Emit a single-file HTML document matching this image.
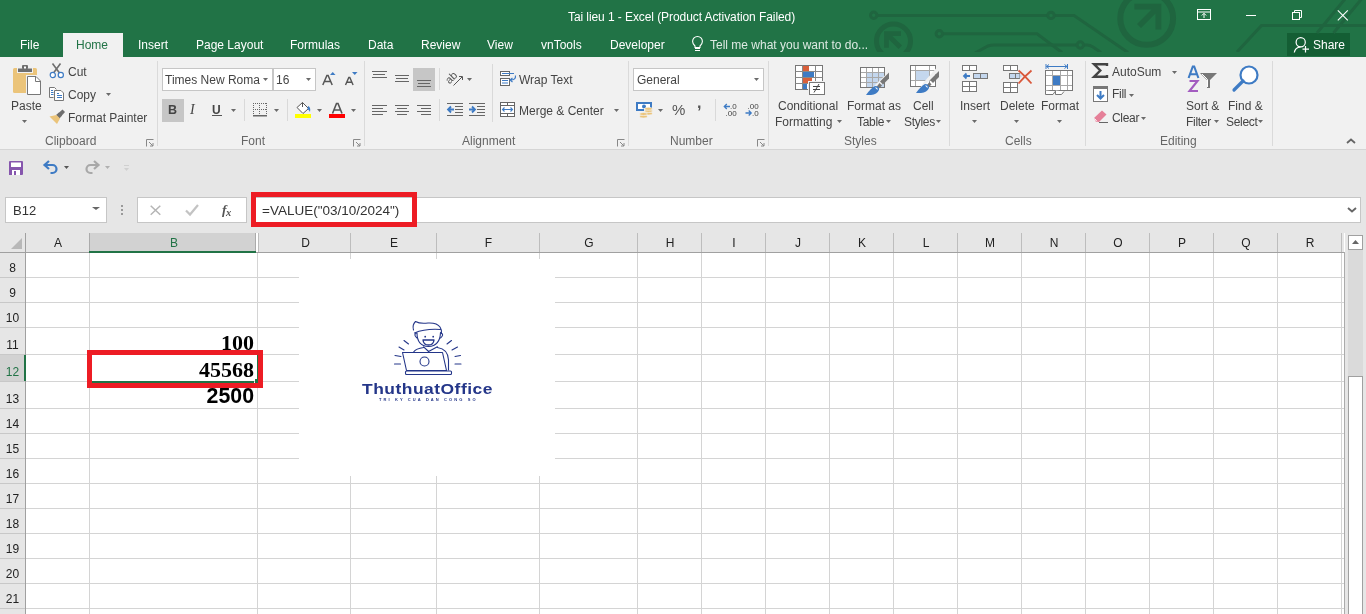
<!DOCTYPE html><html><head><meta charset="utf-8"><style>
*{margin:0;padding:0;box-sizing:border-box}
html,body{width:1366px;height:614px;overflow:hidden;background:#fff;font-family:"Liberation Sans",sans-serif}
.t{position:absolute;white-space:nowrap;line-height:1;-webkit-font-smoothing:antialiased;will-change:transform}
.r{position:absolute}
svg{position:absolute;overflow:visible}
</style></head><body>
<div class="r" style="left:0px;top:0px;width:1366px;height:57px;background:#217346;"></div>
<div class="r" style="left:0px;top:57px;width:1366px;height:92px;background:#F1F1F1;"></div>
<div class="r" style="left:0px;top:149px;width:1366px;height:1px;background:#D5D5D5;"></div>
<div class="r" style="left:0px;top:150px;width:1366px;height:83px;background:#E6E6E6;"></div>
<div class="r" style="left:63px;top:33px;width:60px;height:24px;background:#F1F1F1;"></div>
<div class="t" style="left:568px;top:11px;font-size:12px;color:#fff;letter-spacing:-0.08px">Tai lieu 1 - Excel (Product Activation Failed)</div>
<div class="t" style="left:20px;top:39px;font-size:12px;color:#fff;">File</div>
<div class="t" style="left:76px;top:39px;font-size:12px;color:#217346;">Home</div>
<div class="t" style="left:138px;top:39px;font-size:12px;color:#fff;">Insert</div>
<div class="t" style="left:196px;top:39px;font-size:12px;color:#fff;">Page Layout</div>
<div class="t" style="left:290px;top:39px;font-size:12px;color:#fff;">Formulas</div>
<div class="t" style="left:368px;top:39px;font-size:12px;color:#fff;">Data</div>
<div class="t" style="left:421px;top:39px;font-size:12px;color:#fff;">Review</div>
<div class="t" style="left:487px;top:39px;font-size:12px;color:#fff;">View</div>
<div class="t" style="left:541px;top:39px;font-size:12px;color:#fff;">vnTools</div>
<div class="t" style="left:610px;top:39px;font-size:12px;color:#fff;">Developer</div>
<div class="t" style="left:710px;top:39px;font-size:12px;color:#fff;opacity:.85">Tell me what you want to do...</div>
<div class="r" style="left:1287px;top:33px;width:63px;height:23px;background:#145E34;"></div>
<div class="t" style="left:1313px;top:39px;font-size:12px;color:#fff;">Share</div>
<div class="r" style="left:157px;top:61px;width:1px;height:85px;background:#DADADA;"></div>
<div class="r" style="left:364px;top:61px;width:1px;height:85px;background:#DADADA;"></div>
<div class="r" style="left:628px;top:61px;width:1px;height:85px;background:#DADADA;"></div>
<div class="r" style="left:768px;top:61px;width:1px;height:85px;background:#DADADA;"></div>
<div class="r" style="left:949px;top:61px;width:1px;height:85px;background:#DADADA;"></div>
<div class="r" style="left:1085px;top:61px;width:1px;height:85px;background:#DADADA;"></div>
<div class="r" style="left:1272px;top:61px;width:1px;height:85px;background:#DADADA;"></div>
<div class="t" style="left:45px;top:135px;font-size:12px;color:#666;">Clipboard</div>
<div class="t" style="left:241px;top:135px;font-size:12px;color:#666;">Font</div>
<div class="t" style="left:462px;top:135px;font-size:12px;color:#666;">Alignment</div>
<div class="t" style="left:670px;top:135px;font-size:12px;color:#666;">Number</div>
<div class="t" style="left:844px;top:135px;font-size:12px;color:#666;">Styles</div>
<div class="t" style="left:1005px;top:135px;font-size:12px;color:#666;">Cells</div>
<div class="t" style="left:1160px;top:135px;font-size:12px;color:#666;">Editing</div>
<div class="t" style="left:11px;top:100px;font-size:12px;color:#444;">Paste</div>
<div class="t" style="left:68px;top:66px;font-size:12px;color:#444;">Cut</div>
<div class="t" style="left:68px;top:89px;font-size:12px;color:#444;">Copy</div>
<div class="t" style="left:68px;top:112px;font-size:12px;color:#444;">Format Painter</div>
<div class="r" style="left:162px;top:68px;width:111px;height:23px;background:#fff;border:1px solid #C6C6C6"></div>
<div class="r" style="left:273px;top:68px;width:43px;height:23px;background:#fff;border:1px solid #C6C6C6"></div>
<div class="t" style="left:165px;top:74px;font-size:12px;color:#444;">Times New Roma</div>
<div class="t" style="left:276px;top:74px;font-size:12px;color:#444;">16</div>
<div class="r" style="left:162px;top:99px;width:22px;height:23px;background:#C6C6C6;"></div>
<div class="r" style="left:413px;top:68px;width:22px;height:23px;background:#C6C6C6;"></div>
<div class="t" style="left:519px;top:74px;font-size:12px;color:#444;">Wrap Text</div>
<div class="t" style="left:519px;top:105px;font-size:12px;color:#444;">Merge &amp; Center</div>
<div class="r" style="left:633px;top:68px;width:131px;height:23px;background:#fff;border:1px solid #C6C6C6"></div>
<div class="t" style="left:637px;top:74px;font-size:12px;color:#444;">General</div>
<div class="t" style="left:778px;top:100px;font-size:12px;color:#444;">Conditional</div>
<div class="t" style="left:775px;top:116px;font-size:12px;color:#444;">Formatting</div>
<div class="t" style="left:847px;top:100px;font-size:12px;color:#444;">Format as</div>
<div class="t" style="left:857px;top:116px;font-size:12px;color:#444;letter-spacing:-0.3px">Table</div>
<div class="t" style="left:913px;top:100px;font-size:12px;color:#444;">Cell</div>
<div class="t" style="left:904px;top:116px;font-size:12px;color:#444;letter-spacing:-0.3px">Styles</div>
<div class="t" style="left:960px;top:100px;font-size:12px;color:#444;">Insert</div>
<div class="t" style="left:1000px;top:100px;font-size:12px;color:#444;">Delete</div>
<div class="t" style="left:1041px;top:100px;font-size:12px;color:#444;">Format</div>
<div class="t" style="left:1112px;top:66px;font-size:12px;color:#444;">AutoSum</div>
<div class="t" style="left:1112px;top:88px;font-size:12px;color:#444;letter-spacing:-0.3px">Fill</div>
<div class="t" style="left:1112px;top:112px;font-size:12px;color:#444;letter-spacing:-0.3px">Clear</div>
<div class="t" style="left:1186px;top:100px;font-size:12px;color:#444;">Sort &amp;</div>
<div class="t" style="left:1186px;top:116px;font-size:12px;color:#444;letter-spacing:-0.3px">Filter</div>
<div class="t" style="left:1228px;top:100px;font-size:12px;color:#444;">Find &amp;</div>
<div class="t" style="left:1226px;top:116px;font-size:12px;color:#444;letter-spacing:-0.3px">Select</div>
<div class="r" style="left:5px;top:197px;width:102px;height:26px;background:#fff;border:1px solid #C6C6C6"></div>
<div class="t" style="left:13px;top:204px;font-size:13px;color:#333;">B12</div>
<div class="r" style="left:137px;top:197px;width:110px;height:26px;background:#fff;border:1px solid #C6C6C6"></div>
<div class="r" style="left:251px;top:197px;width:1110px;height:26px;background:#fff;border:1px solid #C6C6C6"></div>
<div class="t" style="left:262px;top:204px;font-size:13.5px;color:#333;">=VALUE("03/10/2024")</div>
<div class="r" style="left:251px;top:192px;width:166px;height:35px;background:transparent;border:5px solid #ED1C24"></div>
<div class="r" style="left:0px;top:233px;width:1344px;height:20px;background:#E6E6E6;"></div>
<div class="r" style="left:0px;top:252px;width:1344px;height:1px;background:#A0A0A0;"></div>
<div class="r" style="left:0px;top:253px;width:25px;height:361px;background:#E6E6E6;"></div>
<div class="r" style="left:25px;top:233px;width:1px;height:381px;background:#A0A0A0;"></div>
<div class="r" style="left:90px;top:233px;width:165px;height:19px;background:#D2D2D2;"></div>
<div class="r" style="left:0px;top:355px;width:25px;height:26px;background:#D2D2D2;"></div>
<div class="r" style="left:24px;top:355px;width:2px;height:26px;background:#217346;"></div>
<div class="r" style="left:89px;top:253px;width:1px;height:361px;background:#D4D4D4;"></div>
<div class="r" style="left:257px;top:253px;width:1px;height:361px;background:#D4D4D4;"></div>
<div class="r" style="left:350px;top:253px;width:1px;height:361px;background:#D4D4D4;"></div>
<div class="r" style="left:436px;top:253px;width:1px;height:361px;background:#D4D4D4;"></div>
<div class="r" style="left:539px;top:253px;width:1px;height:361px;background:#D4D4D4;"></div>
<div class="r" style="left:637px;top:253px;width:1px;height:361px;background:#D4D4D4;"></div>
<div class="r" style="left:701px;top:253px;width:1px;height:361px;background:#D4D4D4;"></div>
<div class="r" style="left:765px;top:253px;width:1px;height:361px;background:#D4D4D4;"></div>
<div class="r" style="left:829px;top:253px;width:1px;height:361px;background:#D4D4D4;"></div>
<div class="r" style="left:893px;top:253px;width:1px;height:361px;background:#D4D4D4;"></div>
<div class="r" style="left:957px;top:253px;width:1px;height:361px;background:#D4D4D4;"></div>
<div class="r" style="left:1021px;top:253px;width:1px;height:361px;background:#D4D4D4;"></div>
<div class="r" style="left:1085px;top:253px;width:1px;height:361px;background:#D4D4D4;"></div>
<div class="r" style="left:1149px;top:253px;width:1px;height:361px;background:#D4D4D4;"></div>
<div class="r" style="left:1213px;top:253px;width:1px;height:361px;background:#D4D4D4;"></div>
<div class="r" style="left:1277px;top:253px;width:1px;height:361px;background:#D4D4D4;"></div>
<div class="r" style="left:1341px;top:253px;width:1px;height:361px;background:#D4D4D4;"></div>
<div class="r" style="left:26px;top:277px;width:1318px;height:1px;background:#D4D4D4;"></div>
<div class="r" style="left:26px;top:302px;width:1318px;height:1px;background:#D4D4D4;"></div>
<div class="r" style="left:26px;top:327px;width:1318px;height:1px;background:#D4D4D4;"></div>
<div class="r" style="left:26px;top:354px;width:1318px;height:1px;background:#D4D4D4;"></div>
<div class="r" style="left:26px;top:381px;width:1318px;height:1px;background:#D4D4D4;"></div>
<div class="r" style="left:26px;top:408px;width:1318px;height:1px;background:#D4D4D4;"></div>
<div class="r" style="left:26px;top:433px;width:1318px;height:1px;background:#D4D4D4;"></div>
<div class="r" style="left:26px;top:458px;width:1318px;height:1px;background:#D4D4D4;"></div>
<div class="r" style="left:26px;top:483px;width:1318px;height:1px;background:#D4D4D4;"></div>
<div class="r" style="left:26px;top:508px;width:1318px;height:1px;background:#D4D4D4;"></div>
<div class="r" style="left:26px;top:533px;width:1318px;height:1px;background:#D4D4D4;"></div>
<div class="r" style="left:26px;top:558px;width:1318px;height:1px;background:#D4D4D4;"></div>
<div class="r" style="left:26px;top:583px;width:1318px;height:1px;background:#D4D4D4;"></div>
<div class="r" style="left:26px;top:608px;width:1318px;height:1px;background:#D4D4D4;"></div>
<div class="r" style="left:89px;top:233px;width:1px;height:19px;background:#ABABAB;"></div>
<div class="r" style="left:350px;top:233px;width:1px;height:19px;background:#BDBDBD;"></div>
<div class="r" style="left:436px;top:233px;width:1px;height:19px;background:#BDBDBD;"></div>
<div class="r" style="left:539px;top:233px;width:1px;height:19px;background:#BDBDBD;"></div>
<div class="r" style="left:637px;top:233px;width:1px;height:19px;background:#BDBDBD;"></div>
<div class="r" style="left:701px;top:233px;width:1px;height:19px;background:#BDBDBD;"></div>
<div class="r" style="left:765px;top:233px;width:1px;height:19px;background:#BDBDBD;"></div>
<div class="r" style="left:829px;top:233px;width:1px;height:19px;background:#BDBDBD;"></div>
<div class="r" style="left:893px;top:233px;width:1px;height:19px;background:#BDBDBD;"></div>
<div class="r" style="left:957px;top:233px;width:1px;height:19px;background:#BDBDBD;"></div>
<div class="r" style="left:1021px;top:233px;width:1px;height:19px;background:#BDBDBD;"></div>
<div class="r" style="left:1085px;top:233px;width:1px;height:19px;background:#BDBDBD;"></div>
<div class="r" style="left:1149px;top:233px;width:1px;height:19px;background:#BDBDBD;"></div>
<div class="r" style="left:1213px;top:233px;width:1px;height:19px;background:#BDBDBD;"></div>
<div class="r" style="left:1277px;top:233px;width:1px;height:19px;background:#BDBDBD;"></div>
<div class="r" style="left:1341px;top:233px;width:1px;height:19px;background:#BDBDBD;"></div>
<div class="r" style="left:255px;top:233px;width:1px;height:19px;background:#ABABAB;"></div>
<div class="r" style="left:256px;top:233px;width:2px;height:19px;background:#FFFFFF;"></div>
<div class="r" style="left:258px;top:233px;width:1px;height:19px;background:#BDBDBD;"></div>
<div class="r" style="left:89px;top:251px;width:167px;height:2px;background:#217346;"></div>
<div class="r" style="left:0px;top:277px;width:25px;height:1px;background:#C8C8C8;"></div>
<div class="r" style="left:0px;top:302px;width:25px;height:1px;background:#C8C8C8;"></div>
<div class="r" style="left:0px;top:327px;width:25px;height:1px;background:#C8C8C8;"></div>
<div class="r" style="left:0px;top:354px;width:25px;height:1px;background:#C8C8C8;"></div>
<div class="r" style="left:0px;top:381px;width:25px;height:1px;background:#C8C8C8;"></div>
<div class="r" style="left:0px;top:408px;width:25px;height:1px;background:#C8C8C8;"></div>
<div class="r" style="left:0px;top:433px;width:25px;height:1px;background:#C8C8C8;"></div>
<div class="r" style="left:0px;top:458px;width:25px;height:1px;background:#C8C8C8;"></div>
<div class="r" style="left:0px;top:483px;width:25px;height:1px;background:#C8C8C8;"></div>
<div class="r" style="left:0px;top:508px;width:25px;height:1px;background:#C8C8C8;"></div>
<div class="r" style="left:0px;top:533px;width:25px;height:1px;background:#C8C8C8;"></div>
<div class="r" style="left:0px;top:558px;width:25px;height:1px;background:#C8C8C8;"></div>
<div class="r" style="left:0px;top:583px;width:25px;height:1px;background:#C8C8C8;"></div>
<div class="r" style="left:0px;top:608px;width:25px;height:1px;background:#C8C8C8;"></div>
<div class="t" style="left:26px;top:237px;width:64px;text-align:center;font-size:12px;color:#222">A</div>
<div class="t" style="left:90px;top:237px;width:168px;text-align:center;font-size:12px;color:#217346">B</div>
<div class="t" style="left:260px;top:237px;width:91px;text-align:center;font-size:12px;color:#222">D</div>
<div class="t" style="left:351px;top:237px;width:86px;text-align:center;font-size:12px;color:#222">E</div>
<div class="t" style="left:437px;top:237px;width:103px;text-align:center;font-size:12px;color:#222">F</div>
<div class="t" style="left:540px;top:237px;width:98px;text-align:center;font-size:12px;color:#222">G</div>
<div class="t" style="left:638px;top:237px;width:64px;text-align:center;font-size:12px;color:#222">H</div>
<div class="t" style="left:702px;top:237px;width:64px;text-align:center;font-size:12px;color:#222">I</div>
<div class="t" style="left:766px;top:237px;width:64px;text-align:center;font-size:12px;color:#222">J</div>
<div class="t" style="left:830px;top:237px;width:64px;text-align:center;font-size:12px;color:#222">K</div>
<div class="t" style="left:894px;top:237px;width:64px;text-align:center;font-size:12px;color:#222">L</div>
<div class="t" style="left:958px;top:237px;width:64px;text-align:center;font-size:12px;color:#222">M</div>
<div class="t" style="left:1022px;top:237px;width:64px;text-align:center;font-size:12px;color:#222">N</div>
<div class="t" style="left:1086px;top:237px;width:64px;text-align:center;font-size:12px;color:#222">O</div>
<div class="t" style="left:1150px;top:237px;width:64px;text-align:center;font-size:12px;color:#222">P</div>
<div class="t" style="left:1214px;top:237px;width:64px;text-align:center;font-size:12px;color:#222">Q</div>
<div class="t" style="left:1278px;top:237px;width:64px;text-align:center;font-size:12px;color:#222">R</div>
<div class="t" style="left:0px;top:262px;width:25px;text-align:center;font-size:12px;color:#222">8</div>
<div class="t" style="left:0px;top:287px;width:25px;text-align:center;font-size:12px;color:#222">9</div>
<div class="t" style="left:0px;top:312px;width:25px;text-align:center;font-size:12px;color:#222">10</div>
<div class="t" style="left:0px;top:339px;width:25px;text-align:center;font-size:12px;color:#222">11</div>
<div class="t" style="left:0px;top:366px;width:25px;text-align:center;font-size:12px;color:#217346">12</div>
<div class="t" style="left:0px;top:393px;width:25px;text-align:center;font-size:12px;color:#222">13</div>
<div class="t" style="left:0px;top:418px;width:25px;text-align:center;font-size:12px;color:#222">14</div>
<div class="t" style="left:0px;top:443px;width:25px;text-align:center;font-size:12px;color:#222">15</div>
<div class="t" style="left:0px;top:468px;width:25px;text-align:center;font-size:12px;color:#222">16</div>
<div class="t" style="left:0px;top:493px;width:25px;text-align:center;font-size:12px;color:#222">17</div>
<div class="t" style="left:0px;top:518px;width:25px;text-align:center;font-size:12px;color:#222">18</div>
<div class="t" style="left:0px;top:543px;width:25px;text-align:center;font-size:12px;color:#222">19</div>
<div class="t" style="left:0px;top:568px;width:25px;text-align:center;font-size:12px;color:#222">20</div>
<div class="t" style="left:0px;top:593px;width:25px;text-align:center;font-size:12px;color:#222">21</div>
<div class="r" style="left:1344px;top:252px;width:1px;height:362px;background:#ABABAB;"></div>
<div class="r" style="left:1345px;top:233px;width:21px;height:381px;background:#E6E6E6;"></div>
<div class="r" style="left:1348px;top:250px;width:15px;height:364px;background:#DADADA;"></div>
<div class="r" style="left:1348px;top:235px;width:15px;height:15px;background:#fff;border:1px solid #A0A0A0"></div>
<div class="r" style="left:1348px;top:376px;width:15px;height:250px;background:#fff;border:1px solid #A0A0A0"></div>
<div class="t" style="left:90px;top:332px;width:164px;text-align:right;font-family:'Liberation Serif';font-weight:bold;font-size:22px;color:#000">100</div>
<div class="t" style="left:90px;top:359px;width:164px;text-align:right;font-family:'Liberation Serif';font-weight:bold;font-size:22px;color:#000">45568</div>
<div class="t" style="left:90px;top:386px;width:164px;text-align:right;font-family:'Liberation Sans';font-weight:bold;font-size:21.33px;color:#000">2500</div>
<div class="r" style="left:88px;top:353px;width:2px;height:30px;background:#217346;"></div>
<div class="r" style="left:88px;top:353px;width:170px;height:2px;background:#217346;"></div>
<div class="r" style="left:257px;top:355px;width:1px;height:24px;background:#217346;"></div>
<div class="r" style="left:88px;top:381px;width:166px;height:2px;background:#217346;"></div>
<div class="r" style="left:255px;top:379px;width:3px;height:4px;background:#217346;"></div>
<div class="r" style="left:299px;top:259px;width:256px;height:217px;background:#fff;"></div>
<div class="r" style="left:87px;top:350px;width:176px;height:38px;background:transparent;border:5px solid #ED1C24"></div>
<svg style="left:13px;top:65px" width="29" height="30" viewBox="0 0 29 30"><rect x="0" y="3" width="24" height="25" rx="1.5" fill="#EBC47A"/><rect x="4" y="2" width="16" height="6" fill="#F1F1F1"/><path d="M5 3.5H19V7H5Z" fill="#6E6E6E"/><rect x="9" y="0" width="6" height="4" rx="1" fill="#6E6E6E"/><rect x="11" y="1.5" width="2" height="2" fill="#fff"/><rect x="13" y="10" width="16" height="21" fill="#F1F1F1"/><path d="M14.5 11.5H23L27.5 16V29.5H14.5Z" fill="#fff" stroke="#777" stroke-width="1"/><path d="M22.5 11.5V16.5H27.5" fill="none" stroke="#777"/></svg>
<svg style="left:22px;top:120px" width="5" height="3" viewBox="0 0 5 3"><path d="M0 0H5L2.5 3Z" fill="#6A6A6A"/></svg>
<svg style="left:49px;top:63px" width="16" height="16" viewBox="0 0 16 16"><path d="M3.5 0.5L10.5 10M11.5 0.5L4.5 10" stroke="#6E6E6E" stroke-width="1.6" fill="none"/><circle cx="3.8" cy="12" r="2.6" fill="#fff" stroke="#3E7BC4" stroke-width="1.2"/><circle cx="11.8" cy="12" r="2.6" fill="#fff" stroke="#3E7BC4" stroke-width="1.2"/></svg>
<svg style="left:49px;top:87px" width="16" height="15" viewBox="0 0 16 15"><path d="M0.5 0.5H5.5L7.5 2.5V10.5H0.5Z" fill="#fff" stroke="#777"/><path d="M2 3.5H4M2 5.5H5M2 7.5H5" stroke="#3E7BC4" stroke-width="1.2"/><path d="M4.5 2.5H12.5L15.5 5.5V14.5H4.5Z" fill="#F1F1F1"/><path d="M5.5 3.5H12L14.5 6V13.5H5.5Z" fill="#fff" stroke="#777"/><path d="M8 6.5H10M8 8.5H13M8 10.5H13" stroke="#3E7BC4" stroke-width="1.2"/></svg>
<svg style="left:106px;top:93px" width="5" height="3" viewBox="0 0 5 3"><path d="M0 0H5L2.5 3Z" fill="#6A6A6A"/></svg>
<svg style="left:49px;top:109px" width="17" height="16" viewBox="0 0 17 16"><path d="M9 4.5L13.5 0.5L16 3L12 7.5Z" fill="#6E6E6E"/><path d="M7 6L10 3.5L13 6.5L10.5 9.5Z" fill="#6E6E6E"/><path d="M0.5 7.5L7.5 6L11 9.5L8 15Z" fill="#EBC47A"/></svg>
<svg style="left:263px;top:78px" width="5" height="3" viewBox="0 0 5 3"><path d="M0 0H5L2.5 3Z" fill="#6A6A6A"/></svg>
<svg style="left:306px;top:78px" width="5" height="3" viewBox="0 0 5 3"><path d="M0 0H5L2.5 3Z" fill="#6A6A6A"/></svg>
<svg style="left:321px;top:71px" width="16" height="15" viewBox="0 0 16 15"><path d="M1.8 14L5.9 4.5H7.1L11.2 14M3.4 10.6H9.6" stroke="#555" stroke-width="1.5" fill="none"/><path d="M9 4H14.5L11.75 1Z" fill="#3E7BC4"/></svg>
<svg style="left:344px;top:71px" width="16" height="15" viewBox="0 0 16 15"><path d="M1.5 14L4.8 6.5H5.8L9.1 14M2.8 11.3H7.8" stroke="#555" stroke-width="1.4" fill="none"/><path d="M8 1H13.5L10.75 4Z" fill="#3E7BC4"/></svg>
<div class="t" style="left:168px;top:104px;font-size:12.5px;font-weight:bold;color:#444">B</div>
<div class="t" style="left:190px;top:103px;font-size:14px;font-style:italic;font-family:'Liberation Serif',serif;color:#444">I</div>
<div class="t" style="left:212px;top:104px;font-size:12px;font-weight:bold;color:#444">U</div>
<svg style="left:212px;top:115px" width="10" height="1" viewBox="0 0 10 1"><rect width="10" height="1" fill="#555"/></svg>
<svg style="left:231px;top:109px" width="5" height="3" viewBox="0 0 5 3"><path d="M0 0H5L2.5 3Z" fill="#6A6A6A"/></svg>
<div class="r" style="left:244px;top:99px;width:1px;height:22px;background:#D9D9D9"></div>
<svg style="left:253px;top:103px" width="14" height="14" viewBox="0 0 14 14"><rect x="0" y="0" width="1" height="1" fill="#666"/><rect x="0" y="6" width="1" height="1" fill="#666"/><rect x="0" y="12" width="1" height="1" fill="#666"/><rect x="0" y="0" width="1" height="1" fill="#666"/><rect x="6" y="0" width="1" height="1" fill="#666"/><rect x="13" y="0" width="1" height="1" fill="#666"/><rect x="2" y="0" width="1" height="1" fill="#666"/><rect x="2" y="6" width="1" height="1" fill="#666"/><rect x="2" y="12" width="1" height="1" fill="#666"/><rect x="0" y="2" width="1" height="1" fill="#666"/><rect x="6" y="2" width="1" height="1" fill="#666"/><rect x="13" y="2" width="1" height="1" fill="#666"/><rect x="4" y="0" width="1" height="1" fill="#666"/><rect x="4" y="6" width="1" height="1" fill="#666"/><rect x="4" y="12" width="1" height="1" fill="#666"/><rect x="0" y="4" width="1" height="1" fill="#666"/><rect x="6" y="4" width="1" height="1" fill="#666"/><rect x="13" y="4" width="1" height="1" fill="#666"/><rect x="6" y="0" width="1" height="1" fill="#666"/><rect x="6" y="6" width="1" height="1" fill="#666"/><rect x="6" y="12" width="1" height="1" fill="#666"/><rect x="0" y="6" width="1" height="1" fill="#666"/><rect x="6" y="6" width="1" height="1" fill="#666"/><rect x="13" y="6" width="1" height="1" fill="#666"/><rect x="8" y="0" width="1" height="1" fill="#666"/><rect x="8" y="6" width="1" height="1" fill="#666"/><rect x="8" y="12" width="1" height="1" fill="#666"/><rect x="0" y="8" width="1" height="1" fill="#666"/><rect x="6" y="8" width="1" height="1" fill="#666"/><rect x="13" y="8" width="1" height="1" fill="#666"/><rect x="10" y="0" width="1" height="1" fill="#666"/><rect x="10" y="6" width="1" height="1" fill="#666"/><rect x="10" y="12" width="1" height="1" fill="#666"/><rect x="0" y="10" width="1" height="1" fill="#666"/><rect x="6" y="10" width="1" height="1" fill="#666"/><rect x="13" y="10" width="1" height="1" fill="#666"/><rect x="12" y="0" width="1" height="1" fill="#666"/><rect x="12" y="6" width="1" height="1" fill="#666"/><rect x="12" y="12" width="1" height="1" fill="#666"/><rect x="0" y="12" width="1" height="1" fill="#666"/><rect x="6" y="12" width="1" height="1" fill="#666"/><rect x="13" y="12" width="1" height="1" fill="#666"/><rect x="0" y="12" width="14" height="1.5" fill="#666"/></svg>
<svg style="left:274px;top:109px" width="5" height="3" viewBox="0 0 5 3"><path d="M0 0H5L2.5 3Z" fill="#6A6A6A"/></svg>
<div class="r" style="left:287px;top:99px;width:1px;height:22px;background:#D9D9D9"></div>
<svg style="left:294px;top:101px" width="18" height="18" viewBox="0 0 18 18"><path d="M8.5 1.5L14.5 7.5L9 12.5L3 6.5Z" fill="#fff" stroke="#555" stroke-width="1"/><path d="M8.5 6V1.5" stroke="#555"/><path d="M14 5Q17 6 16 11Q15 9 13.5 8Z" fill="#3E7BC4"/><rect x="1" y="13" width="16" height="4" fill="#FFFF00"/></svg>
<svg style="left:317px;top:109px" width="5" height="3" viewBox="0 0 5 3"><path d="M0 0H5L2.5 3Z" fill="#6A6A6A"/></svg>
<svg style="left:328px;top:101px" width="18" height="18" viewBox="0 0 18 18"><path d="M4.5 12.5L8.5 2.5H10L14 12.5M6 9H12.5" stroke="#555" stroke-width="1.6" fill="none"/><rect x="1" y="13" width="16" height="4" fill="#FF0000"/></svg>
<svg style="left:351px;top:109px" width="5" height="3" viewBox="0 0 5 3"><path d="M0 0H5L2.5 3Z" fill="#6A6A6A"/></svg>
<svg style="left:146px;top:139px" width="8" height="8" viewBox="0 0 8 8"><path d="M0.5 7.5V0.5H7.5" fill="none" stroke="#888"/><path d="M3 3L7 7M7 4V7H4" fill="none" stroke="#888"/></svg>
<svg style="left:353px;top:139px" width="8" height="8" viewBox="0 0 8 8"><path d="M0.5 7.5V0.5H7.5" fill="none" stroke="#888"/><path d="M3 3L7 7M7 4V7H4" fill="none" stroke="#888"/></svg>
<svg style="left:617px;top:139px" width="8" height="8" viewBox="0 0 8 8"><path d="M0.5 7.5V0.5H7.5" fill="none" stroke="#888"/><path d="M3 3L7 7M7 4V7H4" fill="none" stroke="#888"/></svg>
<svg style="left:757px;top:139px" width="8" height="8" viewBox="0 0 8 8"><path d="M0.5 7.5V0.5H7.5" fill="none" stroke="#888"/><path d="M3 3L7 7M7 4V7H4" fill="none" stroke="#888"/></svg>
<svg style="left:372px;top:71px" width="16" height="16" viewBox="0 0 16 16"><rect x="0" y="0" width="15" height="1" fill="#666"/><rect x="1" y="3" width="12" height="1" fill="#666"/><rect x="0" y="6" width="15" height="1" fill="#666"/></svg>
<svg style="left:395px;top:75px" width="16" height="16" viewBox="0 0 16 16"><rect x="0" y="0" width="14" height="1" fill="#666"/><rect x="1" y="3" width="12" height="1" fill="#666"/><rect x="0" y="6" width="14" height="1" fill="#666"/></svg>
<svg style="left:417px;top:80px" width="16" height="16" viewBox="0 0 16 16"><rect x="0" y="0" width="14" height="1" fill="#666"/><rect x="1" y="3" width="12" height="1" fill="#666"/><rect x="0" y="6" width="14" height="1" fill="#666"/></svg>
<svg style="left:372px;top:105px" width="16" height="16" viewBox="0 0 16 16"><rect x="0" y="0" width="15" height="1" fill="#666"/><rect x="0" y="3" width="11" height="1" fill="#666"/><rect x="0" y="6" width="15" height="1" fill="#666"/><rect x="0" y="9" width="11" height="1" fill="#666"/></svg>
<svg style="left:395px;top:105px" width="16" height="16" viewBox="0 0 16 16"><rect x="0" y="0" width="14" height="1" fill="#666"/><rect x="2" y="3" width="10" height="1" fill="#666"/><rect x="0" y="6" width="14" height="1" fill="#666"/><rect x="2" y="9" width="10" height="1" fill="#666"/></svg>
<svg style="left:417px;top:105px" width="16" height="16" viewBox="0 0 16 16"><rect x="0" y="0" width="14" height="1" fill="#666"/><rect x="4" y="3" width="10" height="1" fill="#666"/><rect x="0" y="6" width="14" height="1" fill="#666"/><rect x="4" y="9" width="10" height="1" fill="#666"/></svg>
<div class="r" style="left:439px;top:68px;width:1px;height:22px;background:#D9D9D9"></div>
<div class="r" style="left:439px;top:99px;width:1px;height:22px;background:#D9D9D9"></div>
<svg style="left:446px;top:71px" width="19" height="17" viewBox="0 0 19 17"><g transform="translate(3.5,13.5) rotate(-45)"><text x="0" y="0" font-family="Liberation Sans" font-size="11" fill="#555">ab</text></g><path d="M7.5 14.5L16 6" stroke="#555" stroke-width="1"/><path d="M13 5.5L16.5 5.5L16.5 9" fill="none" stroke="#555"/></svg>
<svg style="left:467px;top:78px" width="5" height="3" viewBox="0 0 5 3"><path d="M0 0H5L2.5 3Z" fill="#6A6A6A"/></svg>
<svg style="left:447px;top:103px" width="17" height="14" viewBox="0 0 17 14"><rect x="0" y="0" width="16" height="1" fill="#666"/><rect x="8" y="3" width="8" height="1" fill="#666"/><rect x="8" y="6" width="8" height="1" fill="#666"/><rect x="8" y="9" width="8" height="1" fill="#666"/><rect x="0" y="12" width="16" height="1" fill="#666"/><path d="M7 6.5H1.5M4 3.5L1 6.5L4 9.5" stroke="#3E7BC4" stroke-width="1.8" fill="none"/></svg>
<svg style="left:469px;top:103px" width="17" height="14" viewBox="0 0 17 14"><rect x="0" y="0" width="16" height="1" fill="#666"/><rect x="8" y="3" width="8" height="1" fill="#666"/><rect x="8" y="6" width="8" height="1" fill="#666"/><rect x="8" y="9" width="8" height="1" fill="#666"/><rect x="0" y="12" width="16" height="1" fill="#666"/><path d="M0 6.5H5.5M3 3.5L6 6.5L3 9.5" stroke="#3E7BC4" stroke-width="1.8" fill="none"/></svg>
<div class="r" style="left:492px;top:64px;width:1px;height:58px;background:#D9D9D9"></div>
<svg style="left:500px;top:70px" width="18" height="17" viewBox="0 0 18 17"><rect x="0.5" y="1.5" width="9" height="4" fill="#fff" stroke="#666"/><rect x="0.5" y="8.5" width="9" height="7" fill="#fff" stroke="#666"/><path d="M2 3.5H14M2 10.5H8M2 13H8" stroke="#3E7BC4" stroke-width="1"/><path d="M15.5 5.5Q16 10 10.5 10M12.5 8L10 10L12.5 12" stroke="#3E7BC4" stroke-width="1.2" fill="none"/></svg>
<svg style="left:500px;top:102px" width="16" height="16" viewBox="0 0 16 16"><rect x="0.5" y="0.5" width="14" height="14" fill="#fff" stroke="#666"/><path d="M0.5 3.5H14.5M0.5 11.5H14.5M7.5 0.5V3.5M7.5 11.5V14.5" stroke="#666"/><path d="M2.5 7.5H12.5M4.5 5.5L2.5 7.5L4.5 9.5M10.5 5.5L12.5 7.5L10.5 9.5" stroke="#3E7BC4" stroke-width="1.1" fill="none"/></svg>
<svg style="left:614px;top:109px" width="5" height="3" viewBox="0 0 5 3"><path d="M0 0H5L2.5 3Z" fill="#6A6A6A"/></svg>
<svg style="left:754px;top:78px" width="5" height="3" viewBox="0 0 5 3"><path d="M0 0H5L2.5 3Z" fill="#6A6A6A"/></svg>
<svg style="left:636px;top:102px" width="18" height="17" viewBox="0 0 18 17"><rect x="0" y="0" width="16" height="9" fill="#3E7BC4"/><rect x="2" y="2" width="12" height="5" fill="#fff"/><circle cx="8" cy="4.5" r="2" fill="#3E7BC4"/><path d="M8 6H17V17H3V10H8Z" fill="#F1F1F1"/><g fill="#EBC47A" stroke="#F1F1F1" stroke-width="0.7"><ellipse cx="12.5" cy="11.5" rx="3.8" ry="1.5"/><ellipse cx="12.5" cy="9" rx="3.8" ry="1.5"/><ellipse cx="12.5" cy="6.8" rx="3.8" ry="1.5"/><ellipse cx="7.5" cy="14.5" rx="3.8" ry="1.5"/><ellipse cx="7.5" cy="12" rx="3.8" ry="1.5"/></g></svg>
<svg style="left:658px;top:109px" width="5" height="3" viewBox="0 0 5 3"><path d="M0 0H5L2.5 3Z" fill="#6A6A6A"/></svg>
<div class="t" style="left:672px;top:102px;font-size:15px;color:#555">%</div>
<div class="t" style="left:697px;top:95px;font-size:16px;font-weight:bold;color:#555">,</div>
<div class="r" style="left:715px;top:99px;width:1px;height:22px;background:#D9D9D9"></div>
<svg style="left:723px;top:102px" width="16" height="15" viewBox="0 0 16 15"><path d="M7 4.5H1.5M3.8 2L1.3 4.5L3.8 7" stroke="#3E7BC4" stroke-width="1.3" fill="none"/><text x="7" y="7" font-family="Liberation Sans" font-size="8" fill="#444">.0</text><text x="2.5" y="14" font-family="Liberation Sans" font-size="8" fill="#444">.00</text></svg>
<svg style="left:745px;top:102px" width="16" height="15" viewBox="0 0 16 15"><path d="M0.5 11H6M3.7 8.5L6.2 11L3.7 13.5" stroke="#3E7BC4" stroke-width="1.3" fill="none"/><text x="2.5" y="7" font-family="Liberation Sans" font-size="8" fill="#444">.00</text><text x="7" y="14" font-family="Liberation Sans" font-size="8" fill="#444">.0</text></svg>
<svg style="left:795px;top:65px" width="31" height="31" viewBox="0 0 31 31"><rect x="0.5" y="0.5" width="27" height="24" fill="#fff" stroke="#777"/><path d="M7.5 0.5V24.5M20.5 0.5V24.5M0.5 6.5H27.5M0.5 12.5H27.5M0.5 18.5H27.5" stroke="#888"/><rect x="8" y="1" width="6" height="5" fill="#D9603B"/><rect x="8" y="7" width="11" height="5" fill="#3E7BC4"/><rect x="8" y="13" width="9" height="5" fill="#D9603B"/><rect x="8" y="19" width="4" height="5" fill="#3E7BC4"/><rect x="13" y="16" width="18" height="15" fill="#F1F1F1"/><rect x="14.5" y="17.5" width="15" height="12" fill="#fff" stroke="#777"/><path d="M18 21.5H25M18 24.5H25M24 19L19 27.5" stroke="#444" stroke-width="1"/></svg>
<svg style="left:860px;top:66px" width="31" height="30" viewBox="0 0 31 30"><rect x="0.5" y="1.5" width="24" height="20" fill="#fff" stroke="#777"/><rect x="7" y="7" width="17" height="14" fill="#C4D7EE"/><path d="M6.5 1.5V21.5M12.5 1.5V21.5M18.5 1.5V21.5M0.5 6.5H24.5M0.5 11.5H24.5M0.5 16.5H24.5" stroke="#A8A8A8"/><rect x="0.5" y="1.5" width="24" height="20" fill="none" stroke="#777"/><path d="M9 30L28.5 12V6L15 19Z" fill="#F1F1F1"/><path d="M29 6.5V12.5L23 18.5L20 15.5Z" fill="#777"/><path d="M22 19.5L18.5 23L16.5 21L19.5 17Z" fill="#777"/><path d="M6 29Q11 22 15 20Q19.5 20 19 24Q17 28.5 11 29Z" fill="#3E7BC4"/><path d="M15 21.5Q18 21 17.5 24L16 22.5Z" fill="#fff"/></svg>
<svg style="left:910px;top:65px" width="31" height="30" viewBox="0 0 31 30"><rect x="0.5" y="0.5" width="25" height="21" fill="#fff" stroke="#777"/><rect x="6" y="6" width="13" height="10" fill="#C4D7EE"/><path d="M5.5 0.5V21.5M19.5 0.5V21.5M0.5 5.5H25.5M0.5 15.5H25.5" stroke="#A8A8A8"/><rect x="0.5" y="0.5" width="25" height="21" fill="none" stroke="#777"/><path d="M6 29L29 6V0L14 17Z" fill="#F1F1F1"/><path d="M29 6V12L23 18L20 15Z" fill="#777"/><path d="M21.5 19.5L18.5 22.5L16.5 20.5L19.5 17Z" fill="#777"/><path d="M6 28Q11 21 15 19Q19.5 19 19 23Q17 27.5 11 28Z" fill="#3E7BC4"/><path d="M15 20.5Q18 20 17.5 23L16 21.5Z" fill="#fff"/></svg>
<svg style="left:837px;top:120px" width="5" height="3" viewBox="0 0 5 3"><path d="M0 0H5L2.5 3Z" fill="#6A6A6A"/></svg>
<svg style="left:886px;top:120px" width="5" height="3" viewBox="0 0 5 3"><path d="M0 0H5L2.5 3Z" fill="#6A6A6A"/></svg>
<svg style="left:936px;top:120px" width="5" height="3" viewBox="0 0 5 3"><path d="M0 0H5L2.5 3Z" fill="#6A6A6A"/></svg>
<svg style="left:962px;top:65px" width="27" height="28" viewBox="0 0 27 28"><rect x="0.5" y="0.5" width="14" height="5" fill="#fff" stroke="#777"/><path d="M7.5 0.5V5.5" stroke="#777"/><rect x="11.5" y="8.5" width="14" height="5" fill="#C4D7EE" stroke="#777"/><path d="M18.5 8.5V13.5" stroke="#777"/><path d="M8 11H2M4.5 8.5L2 11L4.5 13.5" stroke="#3E7BC4" stroke-width="1.8" fill="none"/><rect x="0.5" y="16.5" width="14" height="10" fill="#fff" stroke="#777"/><path d="M7.5 16.5V26.5M0.5 21.5H14.5" stroke="#777"/></svg>
<svg style="left:1003px;top:65px" width="30" height="29" viewBox="0 0 30 29"><rect x="0.5" y="0.5" width="14" height="5" fill="#fff" stroke="#777"/><path d="M7.5 0.5V5.5" stroke="#777"/><rect x="6.5" y="8.5" width="10" height="5" fill="#C4D7EE" stroke="#777"/><path d="M12.5 8.5V13.5" stroke="#777"/><path d="M16.5 8.5L19 11L16.5 13.5Z" fill="#C4D7EE"/><rect x="0.5" y="17.5" width="14" height="10" fill="#fff" stroke="#777"/><path d="M7.5 17.5V27.5M0.5 22.5H14.5" stroke="#777"/><path d="M15.5 5.5Q21 10 28.5 18.5M28.5 5.5Q22 11 15.5 18.5" stroke="#D9583B" stroke-width="1.8" fill="none"/></svg>
<svg style="left:1045px;top:63px" width="29" height="32" viewBox="0 0 29 32"><path d="M1 1V6M22.5 1V6M1.5 3.5H22M4 1.5L1.5 3.5L4 5.5M19.5 1.5L22 3.5L19.5 5.5" stroke="#3E7BC4" stroke-width="1" fill="none"/><rect x="0.5" y="7.5" width="27" height="20" fill="#fff" stroke="#777"/><path d="M7.5 7.5V27.5M15.5 7.5V27.5M22.5 7.5V27.5M0.5 12.5H27.5M0.5 22.5H27.5" stroke="#A8A8A8"/><rect x="0.5" y="7.5" width="27" height="20" fill="none" stroke="#777"/><rect x="8" y="13" width="7" height="9" fill="#3E7BC4"/><path d="M0.5 27.5V31.5H8L10 28.5M10.5 27.5V31.5H16.5L19 28.5" fill="#fff" stroke="#777"/></svg>
<svg style="left:972px;top:120px" width="5" height="3" viewBox="0 0 5 3"><path d="M0 0H5L2.5 3Z" fill="#6A6A6A"/></svg>
<svg style="left:1014px;top:120px" width="5" height="3" viewBox="0 0 5 3"><path d="M0 0H5L2.5 3Z" fill="#6A6A6A"/></svg>
<svg style="left:1057px;top:120px" width="5" height="3" viewBox="0 0 5 3"><path d="M0 0H5L2.5 3Z" fill="#6A6A6A"/></svg>
<svg style="left:1092px;top:63px" width="17" height="15" viewBox="0 0 17 15"><path d="M15 3V1.2H2L8.3 7.5L2 13.8H15V12" stroke="#444" stroke-width="2.4" fill="none" stroke-linejoin="miter"/></svg>
<svg style="left:1172px;top:71px" width="5" height="3" viewBox="0 0 5 3"><path d="M0 0H5L2.5 3Z" fill="#6A6A6A"/></svg>
<svg style="left:1093px;top:86px" width="16" height="16" viewBox="0 0 16 16"><rect x="0.5" y="0.5" width="14" height="15" fill="#fff" stroke="#777"/><rect x="0" y="0" width="15" height="3" fill="#777"/><path d="M7.5 5V12.5M4 9L7.5 12.5L11 9" stroke="#3E7BC4" stroke-width="2" fill="none"/></svg>
<svg style="left:1129px;top:94px" width="5" height="3" viewBox="0 0 5 3"><path d="M0 0H5L2.5 3Z" fill="#6A6A6A"/></svg>
<svg style="left:1093px;top:109px" width="16" height="15" viewBox="0 0 16 15"><path d="M1 9L9 1.5L13.5 5.5L6 13H3Z" fill="#E57F98"/><path d="M1.5 9.5L4 12.5" stroke="#fff" stroke-width="1"/><rect x="6" y="13" width="9" height="1" fill="#666"/></svg>
<svg style="left:1141px;top:117px" width="5" height="3" viewBox="0 0 5 3"><path d="M0 0H5L2.5 3Z" fill="#6A6A6A"/></svg>
<svg style="left:1187px;top:65px" width="32" height="28" viewBox="0 0 32 28"><path d="M1.6 13L5.8 1.5H7.2L11.4 13M3.6 9.3H9.4" stroke="#3E7BC4" stroke-width="2.1" fill="none"/><path d="M2.5 16H10.5L2.5 26H11" stroke="#A35DC0" stroke-width="2.1" fill="none" stroke-linejoin="miter"/><path d="M13 8H30L23 15V23H20V15Z" fill="#777"/><path d="M15 9L20.5 14.5V22" stroke="#fff" stroke-width="1" fill="none"/></svg>
<svg style="left:1232px;top:64px" width="29" height="29" viewBox="0 0 29 29"><circle cx="17" cy="11" r="8.5" fill="#fff" stroke="#3E7BC4" stroke-width="2.2"/><path d="M11 17L2 26" stroke="#3E7BC4" stroke-width="3.2" stroke-linecap="round"/></svg>
<svg style="left:1214px;top:120px" width="5" height="3" viewBox="0 0 5 3"><path d="M0 0H5L2.5 3Z" fill="#6A6A6A"/></svg>
<svg style="left:1258px;top:120px" width="5" height="3" viewBox="0 0 5 3"><path d="M0 0H5L2.5 3Z" fill="#6A6A6A"/></svg>
<svg style="left:1346px;top:138px" width="10" height="6" viewBox="0 0 10 6"><path d="M1 5L5 1.5L9 5" stroke="#666" stroke-width="1.8" fill="none"/></svg>
<svg style="left:850px;top:0px;overflow:hidden" width="516" height="52" viewBox="0 0 516 52"><g stroke="#1F653F" stroke-width="3" fill="none"><path d="M27 15.4H197.5M204.5 15.4H224L278 52.5"/><circle cx="23.7" cy="15.3" r="3.2"/><circle cx="201" cy="15.4" r="3.2"/><path d="M92.5 33.8H187L212 52.5"/><circle cx="89.3" cy="33.8" r="3.2"/><path d="M125 53L138 46Q141 45 144 45H227M233.5 45H237Q240 45 243 47L251 52.5"/><circle cx="230.3" cy="45" r="3.2"/><path d="M387 52L411.5 25.6H516"/><path d="M495 -1L467 33M511.5 -1L483.5 33"/></g><g stroke="#1F653F" fill="none"><circle cx="43.5" cy="41" r="17" stroke-width="5"/><circle cx="296.7" cy="18.4" r="26.4" stroke-width="6"/></g><g fill="#1F653F"><path d="M34.1 31.2H51V35.9H42.3L52 45.6L48.6 49L38.8 39.3V47.8H34.1Z"/><path d="M284.4 3.8H311.3V29.5H305.5V13.5L291 28L287 24L301.5 9.6H284.4Z"/></g></svg>
<svg style="left:1197px;top:9px" width="15" height="12" viewBox="0 0 15 12"><rect x="0.5" y="0.5" width="13" height="10" fill="none" stroke="#fff"/><path d="M0.5 3H13.5" stroke="#fff"/><path d="M7 9V4.5M4.8 6.5L7 4.3L9.2 6.5" stroke="#fff" stroke-width="1" fill="none"/></svg>
<svg style="left:1246px;top:15px" width="11" height="1" viewBox="0 0 11 1"><rect width="10" height="1" fill="#fff"/></svg>
<svg style="left:1291px;top:10px" width="12" height="11" viewBox="0 0 12 11"><rect x="1.5" y="2.5" width="7" height="7" fill="none" stroke="#fff"/><path d="M3.5 2.5V0.5H10.5V7.5H8.5" fill="none" stroke="#fff"/></svg>
<svg style="left:1337px;top:10px" width="12" height="11" viewBox="0 0 12 11"><path d="M0.8 0.3L10.8 10.3M10.8 0.3L0.8 10.3" stroke="#fff" stroke-width="1.1"/></svg>
<svg style="left:1293px;top:36px" width="17" height="17" viewBox="0 0 17 17"><circle cx="7.7" cy="6.2" r="4.6" fill="none" stroke="#fff" stroke-width="1.2"/><path d="M1.3 16.5Q2 11.5 7.5 10.8" fill="none" stroke="#fff" stroke-width="1.2"/><path d="M9.5 13.2H16M12.5 10V16.5" stroke="#fff" stroke-width="1.2"/></svg>
<svg style="left:692px;top:36px" width="11" height="16" viewBox="0 0 11 16"><path d="M3 11.5V10Q0.6 7.5 0.6 5.4A4.9 4.9 0 0 1 10.4 5.4Q10.4 7.5 8 10V11.5Z" fill="none" stroke="#fff" stroke-width="1.1"/><rect x="3" y="11" width="5" height="2" fill="#fff"/><rect x="3" y="14" width="5" height="1" fill="#fff"/></svg>
<svg style="left:9px;top:161px" width="14" height="14" viewBox="0 0 14 14"><path d="M0 1Q0 0 1 0H13Q14 0 14 1V13Q14 14 13 14H0Z" fill="#8656AD"/><rect x="2" y="1.5" width="10" height="4.5" fill="#fff"/><rect x="3" y="9" width="8" height="5" fill="#fff"/><rect x="5" y="10" width="2" height="4" fill="#8656AD"/></svg>
<svg style="left:43px;top:160px" width="16" height="15" viewBox="0 0 16 15"><path d="M2.5 5H9.5A4 4 0 0 1 9.5 13H7.5" fill="none" stroke="#3E7BC4" stroke-width="2.2"/><path d="M6 1L1.5 5L6 9" fill="none" stroke="#3E7BC4" stroke-width="2.2"/></svg>
<svg style="left:64px;top:166px" width="5" height="3" viewBox="0 0 5 3"><path d="M0 0H5L2.5 3Z" fill="#555"/></svg>
<svg style="left:84px;top:160px" width="16" height="15" viewBox="0 0 16 15"><path d="M13.5 5H6.5A4 4 0 0 0 6.5 13H8.5" fill="none" stroke="#A8A8A8" stroke-width="2.2"/><path d="M10 1L14.5 5L10 9" fill="none" stroke="#A8A8A8" stroke-width="2.2"/></svg>
<svg style="left:105px;top:166px" width="5" height="3" viewBox="0 0 5 3"><path d="M0 0H5L2.5 3Z" fill="#B0B0B0"/></svg>
<svg style="left:124px;top:165px" width="6" height="7" viewBox="0 0 6 7"><rect x="0" y="0" width="5" height="1" fill="#D0D0D0"/><path d="M0 3H5L2.5 6Z" fill="#D0D0D0"/></svg>
<svg style="left:92px;top:207px" width="8" height="3" viewBox="0 0 8 3"><path d="M0 0H8L4.0 3Z" fill="#666"/></svg>
<svg style="left:121px;top:205px" width="3" height="11" viewBox="0 0 3 11"><rect x="0" y="0" width="2" height="2" fill="#999"/><rect x="0" y="4" width="2" height="2" fill="#999"/><rect x="0" y="8" width="2" height="2" fill="#999"/></svg>
<svg style="left:150px;top:205px" width="12" height="11" viewBox="0 0 12 11"><path d="M0.7 0.7L10.3 9.8M10.3 0.7L0.7 9.8" stroke="#B5B5B5" stroke-width="1.5"/></svg>
<svg style="left:185px;top:204px" width="14" height="12" viewBox="0 0 14 12"><path d="M1 6.5L5 10.5L13 1" stroke="#C3C3C3" stroke-width="2.2" fill="none"/></svg>
<div class="t" style="left:222px;top:203px;font-size:13.5px;font-style:italic;font-weight:bold;font-family:'Liberation Serif',serif;color:#555">f<span style="font-size:10.5px;position:relative;top:1.5px;left:-0.5px">x</span></div>
<svg style="left:1347px;top:207px" width="10" height="6" viewBox="0 0 10 6"><path d="M1 1L5 4.5L9 1" stroke="#666" stroke-width="1.9" fill="none"/></svg>
<svg style="left:11px;top:238px" width="11" height="11" viewBox="0 0 11 11"><path d="M11 0V11H0Z" fill="#B8B8B8"/></svg>
<svg style="left:1352px;top:240px" width="7" height="4" viewBox="0 0 7 4"><path d="M0 4H7L3.5 0Z" fill="#666"/></svg>
<svg style="left:390px;top:318px" width="75" height="60" viewBox="0 0 75 60"><g fill="none" stroke="#243689" stroke-width="1.1" stroke-linecap="round" stroke-linejoin="round"><path d="M23.5 12Q22 7 25.5 3.5Q30 6 38 5Q47 4.5 50 9Q52 12 51.5 15.5"/><path d="M24.5 15Q35 10.5 50.5 11.5"/><path d="M27 15Q27 28 38.5 28.5Q50 28 50.5 14.5"/><path d="M26.5 15Q23 16.5 27 20M51 15Q54.5 16.5 50.5 20"/><path d="M33 22H44Q43.5 27 38.5 27Q33.5 27 33 22Z" stroke-width="1.3"/><path d="M33.6 28.8L38.6 33.5L47.4 28.8M23.6 34Q26 30.5 33.6 29.5M47.4 29.5Q58 31 58.5 42V52"/><path d="M12.5 34.5H52.5L56.5 52.5H16.5Z"/><circle cx="34.5" cy="43.5" r="4.5"/><rect x="15.5" y="53" width="46" height="3.5" rx="1"/><path d="M14 22.5L18.5 26M9 29L14 32M5 37.5L11 38.5M4.5 46H10.5"/><path d="M57 26L61.5 22.5M62 32L67.5 29M65 38.5L70.5 37.5M65 46H71"/></g><circle cx="35.2" cy="18.7" r="0.9" fill="#243689"/><circle cx="43.2" cy="18.7" r="0.9" fill="#243689"/></svg>
<div class="t" style="left:362px;top:382px;font-size:14px;font-weight:bold;letter-spacing:0.4px;color:#243689;transform:scaleX(1.245);transform-origin:0 0">ThuthuatOffice</div>
<div class="t" style="left:379px;top:398px;font-size:4px;font-weight:bold;letter-spacing:2.1px;color:#243689">TRI KY CUA DAN CONG SO</div>
</body></html>
